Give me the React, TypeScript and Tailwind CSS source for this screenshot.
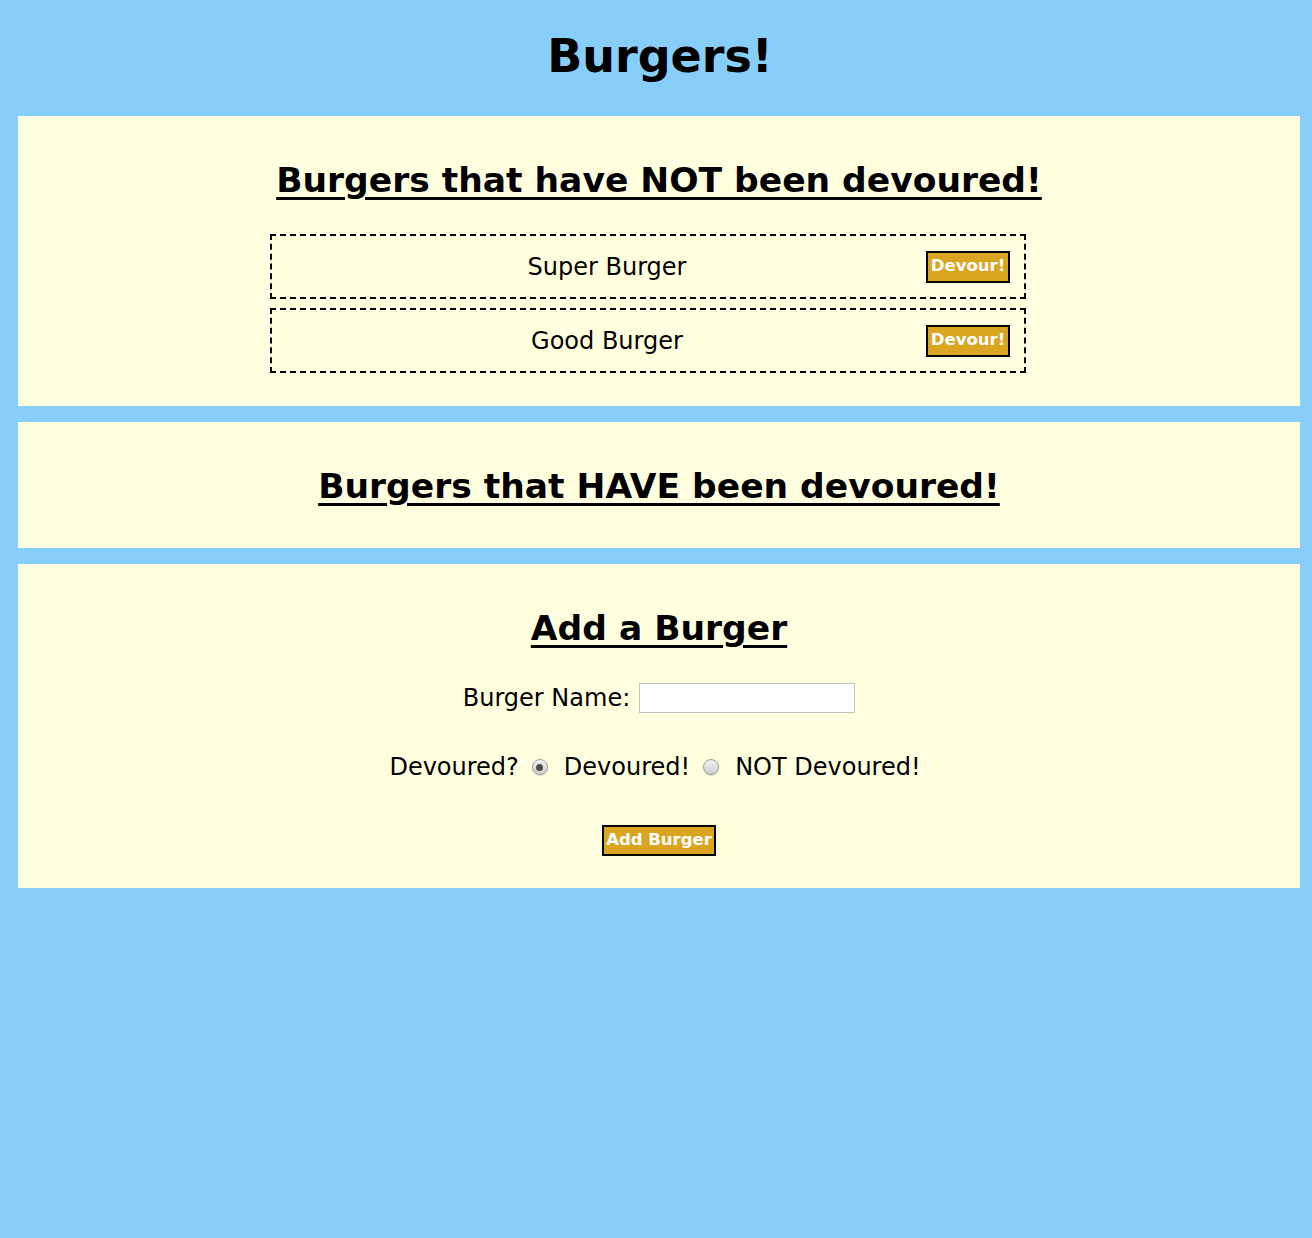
import React from "react";

const burgers = ["Super Burger", "Good Burger"];

function Radio({ checked }: { checked?: boolean }) {
  return (
    <span className="flex h-[16px] w-[16px] items-center justify-center rounded-full border border-[#9f9f9f] bg-gradient-to-b from-[#f2f2f2] to-[#cfcfcf] shadow-[0_1px_1px_rgba(0,0,0,0.15)]">
      {checked ? <span className="h-[7px] w-[7px] rounded-full bg-[#4d4d4d]" /> : null}
    </span>
  );
}

export default function App() {
  return (
    <div className="min-h-screen bg-[#87CEFA] pb-10 font-['DejaVu_Sans',sans-serif] text-black">
      <h1 className="flex h-[112px] items-center justify-center pl-[8px] text-[46px] font-bold">
        Burgers!
      </h1>

      <div className="mt-[4px] ml-[18px] mr-[12px] flex flex-col gap-4">
        <section className="bg-[#FFFFE0] pt-[44px] pb-[33px]">
          <h2 className="text-center text-[34.5px] leading-[40px] font-bold underline underline-offset-[5px] decoration-[2.5px]">
            Burgers that have NOT been devoured!
          </h2>
          <div className="ml-[252px] mt-[34px] flex w-[756px] flex-col gap-[9px]">
            {burgers.map((name) => (
              <div
                key={name}
                className="flex h-[65px] items-center border-2 border-dashed border-black pl-[16px] pr-[14px]"
              >
                <span className="flex-1 text-center text-[24px]">{name}</span>
                <button className="h-[32px] w-[84px] border-2 border-black bg-[#DAA520] text-[16.5px] font-bold text-white">
                  Devour!
                </button>
              </div>
            ))}
          </div>
        </section>

        <section className="bg-[#FFFFE0] pt-[44px] pb-[42px]">
          <h2 className="text-center text-[34.5px] leading-[40px] font-bold underline underline-offset-[5px] decoration-[2.5px]">
            Burgers that HAVE been devoured!
          </h2>
        </section>

        <section className="bg-[#FFFFE0] pt-[44px] pb-[32px]">
          <h2 className="text-center text-[34.5px] leading-[40px] font-bold underline underline-offset-[5px] decoration-[2.5px]">
            Add a Burger
          </h2>
          <div className="mt-[35px] flex h-[30px] items-center justify-center gap-[9px] text-[24px]">
            <span>Burger Name:</span>
            <input className="h-[30px] w-[216px] border border-[#c3c3c3] bg-white" />
          </div>
          <div className="mt-[39px] flex h-[30px] items-center justify-center pr-[8px] text-[24px]">
            <span>Devoured?</span>
            <span className="ml-[13px] mr-[16px] flex items-center">
              <Radio checked />
            </span>
            <span>Devoured!</span>
            <span className="ml-[13px] mr-[16px] flex items-center">
              <Radio />
            </span>
            <span>NOT Devoured!</span>
          </div>
          <div className="mt-[43px] flex justify-center">
            <button className="h-[31px] w-[114px] border-2 border-black bg-[#DAA520] text-[16.5px] font-bold text-white">
              Add Burger
            </button>
          </div>
        </section>
      </div>
    </div>
  );
}
